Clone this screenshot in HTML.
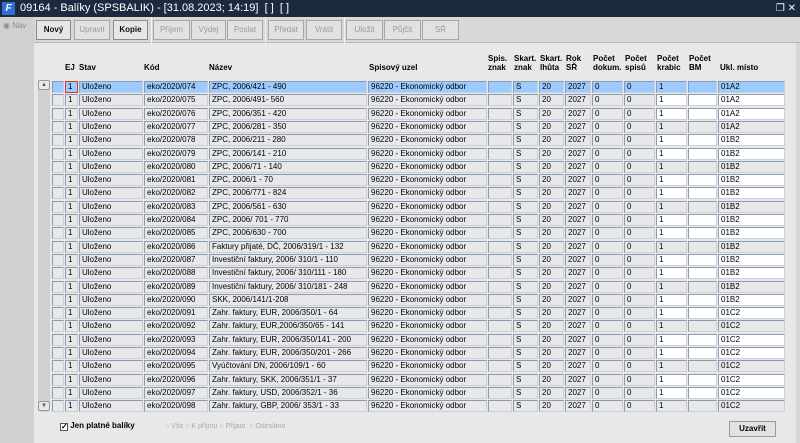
<!DOCTYPE html>
<html><head><meta charset="utf-8"><style>
*{box-sizing:border-box;margin:0;padding:0}
body{width:800px;height:443px;overflow:hidden;background:#d6d6d6;font-family:"Liberation Sans",sans-serif;font-size:8px;color:#000;position:relative}
.tb{position:absolute;left:0;top:0;width:800px;height:17px;background:#1c2a40;color:#fff;font-size:11px;line-height:17px;padding-left:20px}
.logo{position:absolute;left:2px;top:2px;width:13px;height:13px;background:#2f6fd0;color:#fff;font-size:10px;line-height:13px;text-align:center;font-style:italic;font-weight:bold}
.nav{position:absolute;left:0;top:17px;width:34px;height:426px;background:#d0d0d0;color:#8a8a8a;font-size:8px;padding:4px 0 0 3px}
.tool{position:absolute;left:34px;top:17px;width:766px;height:26px;background:#d8d8d8;border-bottom:1px solid #b8b8b8}
.btn{position:absolute;top:3px;height:20px;border:1px solid #a8a8a8;background:#e2e2e2;font-size:8px;line-height:18px;text-align:center;color:#999}
.btn.on{color:#111;font-weight:bold;border-color:#8a8a8a;background:#e6e6e6}
.sep{position:absolute;top:0;width:1px;height:26px;background:#b0b0b0;border-right:1px solid #f2f2f2}
.main{position:absolute;left:34px;top:43px;width:762px;height:400px;background:#e8e8e8}
.h{position:absolute;font-weight:bold;font-size:8px;line-height:9px}
.r{position:absolute;left:52px;height:12px;display:flex;gap:1px}
.r span{display:block;height:12px;border:1px solid #8a9ab0;border-right-color:#c8d0dc;border-bottom-color:#c8d0dc;background:#e8e8e8;font-size:8px;line-height:10px;padding-left:2px;white-space:nowrap;overflow:hidden;color:#000}
.r span.w{background:#fff}
.r.sel span{background:#9ccbff}
.sb{position:absolute;left:38px;top:80px;width:12px;height:332px;background:#d0d0d0;border-radius:3px}
.sbb{position:absolute;left:38px;width:12px;height:10px;background:#e8e8e8;border:1px solid #999;border-radius:2px;font-size:6px;line-height:8px;text-align:center;color:#555}
</style></head><body>
<div class="tb"><div class="logo">F</div>09164 - Balíky (SPSBALIK) - [31.08.2023; 14:19]&nbsp; [ ]&nbsp; [ ]<span style="position:absolute;right:4px;top:0;font-size:10px">❐ ✕</span></div>
<div class="nav">◉ Nav</div>
<div class="tool">
<div class="btn on" style="left:2px;width:35px">Nový</div>
<div class="btn" style="left:40px;width:36px">Upravit</div>
<div class="btn on" style="left:79px;width:35px">Kopie</div>
<div class="sep" style="left:117px"></div>
<div class="btn" style="left:119px;width:37px">Příjem</div>
<div class="btn" style="left:157px;width:35px">Výdej</div>
<div class="btn" style="left:193px;width:36px">Poslat</div>
<div class="sep" style="left:231px"></div>
<div class="btn" style="left:234px;width:36px">Předat</div>
<div class="btn" style="left:272px;width:36px">Vrátit</div>
<div class="sep" style="left:310px"></div>
<div class="btn" style="left:312px;width:37px">Uložit</div>
<div class="btn" style="left:350px;width:37px">Půjčit</div>
<div class="btn" style="left:388px;width:37px">SŘ</div>
</div>
<div class="main"></div>
<div class="h" style="left:65px;top:63px">EJ</div>
<div class="h" style="left:79px;top:63px">Stav</div>
<div class="h" style="left:144px;top:63px">Kód</div>
<div class="h" style="left:209px;top:63px">Název</div>
<div class="h" style="left:369px;top:63px">Spisový uzel</div>
<div class="h" style="left:488px;top:54px">Spis.<br>znak</div>
<div class="h" style="left:514px;top:54px">Skart.<br>znak</div>
<div class="h" style="left:540px;top:54px">Skart.<br>lhůta</div>
<div class="h" style="left:566px;top:54px">Rok<br>SŘ</div>
<div class="h" style="left:593px;top:54px">Počet<br>dokum.</div>
<div class="h" style="left:625px;top:54px">Počet<br>spisů</div>
<div class="h" style="left:657px;top:54px">Počet<br>krabic</div>
<div class="h" style="left:689px;top:54px">Počet<br>BM</div>
<div class="h" style="left:720px;top:63px">Ukl. místo</div>
<div class="sb"></div>
<div class="sbb" style="top:80px">▲</div>
<div class="sbb" style="top:401px">▼</div>

<div class="r sel" style="top:81px"><span style="width:12px"></span><span style="width:13px;border:1px solid #e03030">1</span><span style="width:64px">Uloženo</span><span style="width:64px">eko/2020/074</span><span style="width:158px">ZPC, 2006/421 - 490</span><span style="width:119px">96220 - Ekonomický odbor</span><span style="width:24px"></span><span style="width:25px">S</span><span style="width:25px">20</span><span style="width:26px">2027</span><span style="width:31px">0</span><span style="width:31px">0</span><span style="width:31px">1</span><span style="width:29px"></span><span style="width:67px">01A2</span></div>
<div class="r" style="top:94.3px"><span style="width:12px"></span><span style="width:13px">1</span><span style="width:64px">Uloženo</span><span style="width:64px">eko/2020/075</span><span style="width:158px">ZPC, 2006/491- 560</span><span style="width:119px">96220 - Ekonomický odbor</span><span style="width:24px"></span><span style="width:25px">S</span><span style="width:25px">20</span><span style="width:26px">2027</span><span style="width:31px">0</span><span style="width:31px">0</span><span class="w" style="width:31px">1</span><span class="w" style="width:29px"></span><span class="w" style="width:67px">01A2</span></div>
<div class="r" style="top:107.6px"><span style="width:12px"></span><span style="width:13px">1</span><span style="width:64px">Uloženo</span><span style="width:64px">eko/2020/076</span><span style="width:158px">ZPC, 2006/351 - 420</span><span style="width:119px">96220 - Ekonomický odbor</span><span style="width:24px"></span><span style="width:25px">S</span><span style="width:25px">20</span><span style="width:26px">2027</span><span style="width:31px">0</span><span style="width:31px">0</span><span class="w" style="width:31px">1</span><span class="w" style="width:29px"></span><span class="w" style="width:67px">01A2</span></div>
<div class="r" style="top:120.9px"><span style="width:12px"></span><span style="width:13px">1</span><span style="width:64px">Uloženo</span><span style="width:64px">eko/2020/077</span><span style="width:158px">ZPC, 2006/281 - 350</span><span style="width:119px">96220 - Ekonomický odbor</span><span style="width:24px"></span><span style="width:25px">S</span><span style="width:25px">20</span><span style="width:26px">2027</span><span style="width:31px">0</span><span style="width:31px">0</span><span style="width:31px">1</span><span style="width:29px"></span><span style="width:67px">01A2</span></div>
<div class="r" style="top:134.2px"><span style="width:12px"></span><span style="width:13px">1</span><span style="width:64px">Uloženo</span><span style="width:64px">eko/2020/078</span><span style="width:158px">ZPC, 2006/211 - 280</span><span style="width:119px">96220 - Ekonomický odbor</span><span style="width:24px"></span><span style="width:25px">S</span><span style="width:25px">20</span><span style="width:26px">2027</span><span style="width:31px">0</span><span style="width:31px">0</span><span class="w" style="width:31px">1</span><span class="w" style="width:29px"></span><span class="w" style="width:67px">01B2</span></div>
<div class="r" style="top:147.5px"><span style="width:12px"></span><span style="width:13px">1</span><span style="width:64px">Uloženo</span><span style="width:64px">eko/2020/079</span><span style="width:158px">ZPC, 2006/141 - 210</span><span style="width:119px">96220 - Ekonomický odbor</span><span style="width:24px"></span><span style="width:25px">S</span><span style="width:25px">20</span><span style="width:26px">2027</span><span style="width:31px">0</span><span style="width:31px">0</span><span class="w" style="width:31px">1</span><span class="w" style="width:29px"></span><span class="w" style="width:67px">01B2</span></div>
<div class="r" style="top:160.8px"><span style="width:12px"></span><span style="width:13px">1</span><span style="width:64px">Uloženo</span><span style="width:64px">eko/2020/080</span><span style="width:158px">ZPC, 2006/71 - 140</span><span style="width:119px">96220 - Ekonomický odbor</span><span style="width:24px"></span><span style="width:25px">S</span><span style="width:25px">20</span><span style="width:26px">2027</span><span style="width:31px">0</span><span style="width:31px">0</span><span style="width:31px">1</span><span style="width:29px"></span><span style="width:67px">01B2</span></div>
<div class="r" style="top:174.1px"><span style="width:12px"></span><span style="width:13px">1</span><span style="width:64px">Uloženo</span><span style="width:64px">eko/2020/081</span><span style="width:158px">ZPC, 2006/1 - 70</span><span style="width:119px">96220 - Ekonomický odbor</span><span style="width:24px"></span><span style="width:25px">S</span><span style="width:25px">20</span><span style="width:26px">2027</span><span style="width:31px">0</span><span style="width:31px">0</span><span class="w" style="width:31px">1</span><span class="w" style="width:29px"></span><span class="w" style="width:67px">01B2</span></div>
<div class="r" style="top:187.4px"><span style="width:12px"></span><span style="width:13px">1</span><span style="width:64px">Uloženo</span><span style="width:64px">eko/2020/082</span><span style="width:158px">ZPC, 2006/771 - 824</span><span style="width:119px">96220 - Ekonomický odbor</span><span style="width:24px"></span><span style="width:25px">S</span><span style="width:25px">20</span><span style="width:26px">2027</span><span style="width:31px">0</span><span style="width:31px">0</span><span class="w" style="width:31px">1</span><span class="w" style="width:29px"></span><span class="w" style="width:67px">01B2</span></div>
<div class="r" style="top:200.7px"><span style="width:12px"></span><span style="width:13px">1</span><span style="width:64px">Uloženo</span><span style="width:64px">eko/2020/083</span><span style="width:158px">ZPC, 2006/561 - 630</span><span style="width:119px">96220 - Ekonomický odbor</span><span style="width:24px"></span><span style="width:25px">S</span><span style="width:25px">20</span><span style="width:26px">2027</span><span style="width:31px">0</span><span style="width:31px">0</span><span style="width:31px">1</span><span style="width:29px"></span><span style="width:67px">01B2</span></div>
<div class="r" style="top:214px"><span style="width:12px"></span><span style="width:13px">1</span><span style="width:64px">Uloženo</span><span style="width:64px">eko/2020/084</span><span style="width:158px">ZPC, 2006/ 701 - 770</span><span style="width:119px">96220 - Ekonomický odbor</span><span style="width:24px"></span><span style="width:25px">S</span><span style="width:25px">20</span><span style="width:26px">2027</span><span style="width:31px">0</span><span style="width:31px">0</span><span class="w" style="width:31px">1</span><span class="w" style="width:29px"></span><span class="w" style="width:67px">01B2</span></div>
<div class="r" style="top:227.3px"><span style="width:12px"></span><span style="width:13px">1</span><span style="width:64px">Uloženo</span><span style="width:64px">eko/2020/085</span><span style="width:158px">ZPC, 2006/630 - 700</span><span style="width:119px">96220 - Ekonomický odbor</span><span style="width:24px"></span><span style="width:25px">S</span><span style="width:25px">20</span><span style="width:26px">2027</span><span style="width:31px">0</span><span style="width:31px">0</span><span class="w" style="width:31px">1</span><span class="w" style="width:29px"></span><span class="w" style="width:67px">01B2</span></div>
<div class="r" style="top:240.6px"><span style="width:12px"></span><span style="width:13px">1</span><span style="width:64px">Uloženo</span><span style="width:64px">eko/2020/086</span><span style="width:158px">Faktury přijaté, DČ, 2006/319/1 - 132</span><span style="width:119px">96220 - Ekonomický odbor</span><span style="width:24px"></span><span style="width:25px">S</span><span style="width:25px">20</span><span style="width:26px">2027</span><span style="width:31px">0</span><span style="width:31px">0</span><span style="width:31px">1</span><span style="width:29px"></span><span style="width:67px">01B2</span></div>
<div class="r" style="top:253.9px"><span style="width:12px"></span><span style="width:13px">1</span><span style="width:64px">Uloženo</span><span style="width:64px">eko/2020/087</span><span style="width:158px">Investiční faktury, 2006/ 310/1 - 110</span><span style="width:119px">96220 - Ekonomický odbor</span><span style="width:24px"></span><span style="width:25px">S</span><span style="width:25px">20</span><span style="width:26px">2027</span><span style="width:31px">0</span><span style="width:31px">0</span><span class="w" style="width:31px">1</span><span class="w" style="width:29px"></span><span class="w" style="width:67px">01B2</span></div>
<div class="r" style="top:267.2px"><span style="width:12px"></span><span style="width:13px">1</span><span style="width:64px">Uloženo</span><span style="width:64px">eko/2020/088</span><span style="width:158px">Investiční faktury, 2006/ 310/111 - 180</span><span style="width:119px">96220 - Ekonomický odbor</span><span style="width:24px"></span><span style="width:25px">S</span><span style="width:25px">20</span><span style="width:26px">2027</span><span style="width:31px">0</span><span style="width:31px">0</span><span class="w" style="width:31px">1</span><span class="w" style="width:29px"></span><span class="w" style="width:67px">01B2</span></div>
<div class="r" style="top:280.5px"><span style="width:12px"></span><span style="width:13px">1</span><span style="width:64px">Uloženo</span><span style="width:64px">eko/2020/089</span><span style="width:158px">Investiční faktury, 2006/ 310/181 - 248</span><span style="width:119px">96220 - Ekonomický odbor</span><span style="width:24px"></span><span style="width:25px">S</span><span style="width:25px">20</span><span style="width:26px">2027</span><span style="width:31px">0</span><span style="width:31px">0</span><span style="width:31px">1</span><span style="width:29px"></span><span style="width:67px">01B2</span></div>
<div class="r" style="top:293.8px"><span style="width:12px"></span><span style="width:13px">1</span><span style="width:64px">Uloženo</span><span style="width:64px">eko/2020/090</span><span style="width:158px">SKK, 2006/141/1-208</span><span style="width:119px">96220 - Ekonomický odbor</span><span style="width:24px"></span><span style="width:25px">S</span><span style="width:25px">20</span><span style="width:26px">2027</span><span style="width:31px">0</span><span style="width:31px">0</span><span class="w" style="width:31px">1</span><span class="w" style="width:29px"></span><span class="w" style="width:67px">01B2</span></div>
<div class="r" style="top:307.1px"><span style="width:12px"></span><span style="width:13px">1</span><span style="width:64px">Uloženo</span><span style="width:64px">eko/2020/091</span><span style="width:158px">Zahr. faktury, EUR, 2006/350/1 - 64</span><span style="width:119px">96220 - Ekonomický odbor</span><span style="width:24px"></span><span style="width:25px">S</span><span style="width:25px">20</span><span style="width:26px">2027</span><span style="width:31px">0</span><span style="width:31px">0</span><span class="w" style="width:31px">1</span><span class="w" style="width:29px"></span><span class="w" style="width:67px">01C2</span></div>
<div class="r" style="top:320.4px"><span style="width:12px"></span><span style="width:13px">1</span><span style="width:64px">Uloženo</span><span style="width:64px">eko/2020/092</span><span style="width:158px">Zahr. faktury, EUR,2006/350/65 - 141</span><span style="width:119px">96220 - Ekonomický odbor</span><span style="width:24px"></span><span style="width:25px">S</span><span style="width:25px">20</span><span style="width:26px">2027</span><span style="width:31px">0</span><span style="width:31px">0</span><span style="width:31px">1</span><span style="width:29px"></span><span style="width:67px">01C2</span></div>
<div class="r" style="top:333.7px"><span style="width:12px"></span><span style="width:13px">1</span><span style="width:64px">Uloženo</span><span style="width:64px">eko/2020/093</span><span style="width:158px">Zahr. faktury, EUR, 2006/350/141 - 200</span><span style="width:119px">96220 - Ekonomický odbor</span><span style="width:24px"></span><span style="width:25px">S</span><span style="width:25px">20</span><span style="width:26px">2027</span><span style="width:31px">0</span><span style="width:31px">0</span><span class="w" style="width:31px">1</span><span class="w" style="width:29px"></span><span class="w" style="width:67px">01C2</span></div>
<div class="r" style="top:347px"><span style="width:12px"></span><span style="width:13px">1</span><span style="width:64px">Uloženo</span><span style="width:64px">eko/2020/094</span><span style="width:158px">Zahr. faktury, EUR, 2006/350/201 - 266</span><span style="width:119px">96220 - Ekonomický odbor</span><span style="width:24px"></span><span style="width:25px">S</span><span style="width:25px">20</span><span style="width:26px">2027</span><span style="width:31px">0</span><span style="width:31px">0</span><span class="w" style="width:31px">1</span><span class="w" style="width:29px"></span><span class="w" style="width:67px">01C2</span></div>
<div class="r" style="top:360.3px"><span style="width:12px"></span><span style="width:13px">1</span><span style="width:64px">Uloženo</span><span style="width:64px">eko/2020/095</span><span style="width:158px">Vyúčtování DN, 2006/109/1 - 60</span><span style="width:119px">96220 - Ekonomický odbor</span><span style="width:24px"></span><span style="width:25px">S</span><span style="width:25px">20</span><span style="width:26px">2027</span><span style="width:31px">0</span><span style="width:31px">0</span><span style="width:31px">1</span><span style="width:29px"></span><span style="width:67px">01C2</span></div>
<div class="r" style="top:373.6px"><span style="width:12px"></span><span style="width:13px">1</span><span style="width:64px">Uloženo</span><span style="width:64px">eko/2020/096</span><span style="width:158px">Zahr. faktury, SKK, 2006/351/1 - 37</span><span style="width:119px">96220 - Ekonomický odbor</span><span style="width:24px"></span><span style="width:25px">S</span><span style="width:25px">20</span><span style="width:26px">2027</span><span style="width:31px">0</span><span style="width:31px">0</span><span class="w" style="width:31px">1</span><span class="w" style="width:29px"></span><span class="w" style="width:67px">01C2</span></div>
<div class="r" style="top:386.9px"><span style="width:12px"></span><span style="width:13px">1</span><span style="width:64px">Uloženo</span><span style="width:64px">eko/2020/097</span><span style="width:158px">Zahr. faktury, USD, 2006/352/1 - 36</span><span style="width:119px">96220 - Ekonomický odbor</span><span style="width:24px"></span><span style="width:25px">S</span><span style="width:25px">20</span><span style="width:26px">2027</span><span style="width:31px">0</span><span style="width:31px">0</span><span class="w" style="width:31px">1</span><span class="w" style="width:29px"></span><span class="w" style="width:67px">01C2</span></div>
<div class="r" style="top:400.2px"><span style="width:12px"></span><span style="width:13px">1</span><span style="width:64px">Uloženo</span><span style="width:64px">eko/2020/098</span><span style="width:158px">Zahr. faktury, GBP, 2006/ 353/1 - 33</span><span style="width:119px">96220 - Ekonomický odbor</span><span style="width:24px"></span><span style="width:25px">S</span><span style="width:25px">20</span><span style="width:26px">2027</span><span style="width:31px">0</span><span style="width:31px">0</span><span style="width:31px">1</span><span style="width:29px"></span><span style="width:67px">01C2</span></div>

<div style="position:absolute;left:60px;top:421px;font-size:8px;font-weight:bold;line-height:10px"><span style="display:inline-block;width:8px;height:8px;border:1px solid #555;background:#fff;font-size:8px;line-height:6px;vertical-align:-1px">✓</span> Jen platné balíky</div>
<div style="position:absolute;left:165px;top:422px;font-size:7px;color:#aaa;line-height:9px">○ Vše ○ K příjmu ○ Přijato &nbsp;○ Odesláno</div>
<div style="position:absolute;left:729px;top:421px;width:47px;height:16px;border:1px solid #999;background:#e2e2e2;font-weight:bold;font-size:8px;line-height:14px;text-align:center">Uzavřít</div>
</body></html>
